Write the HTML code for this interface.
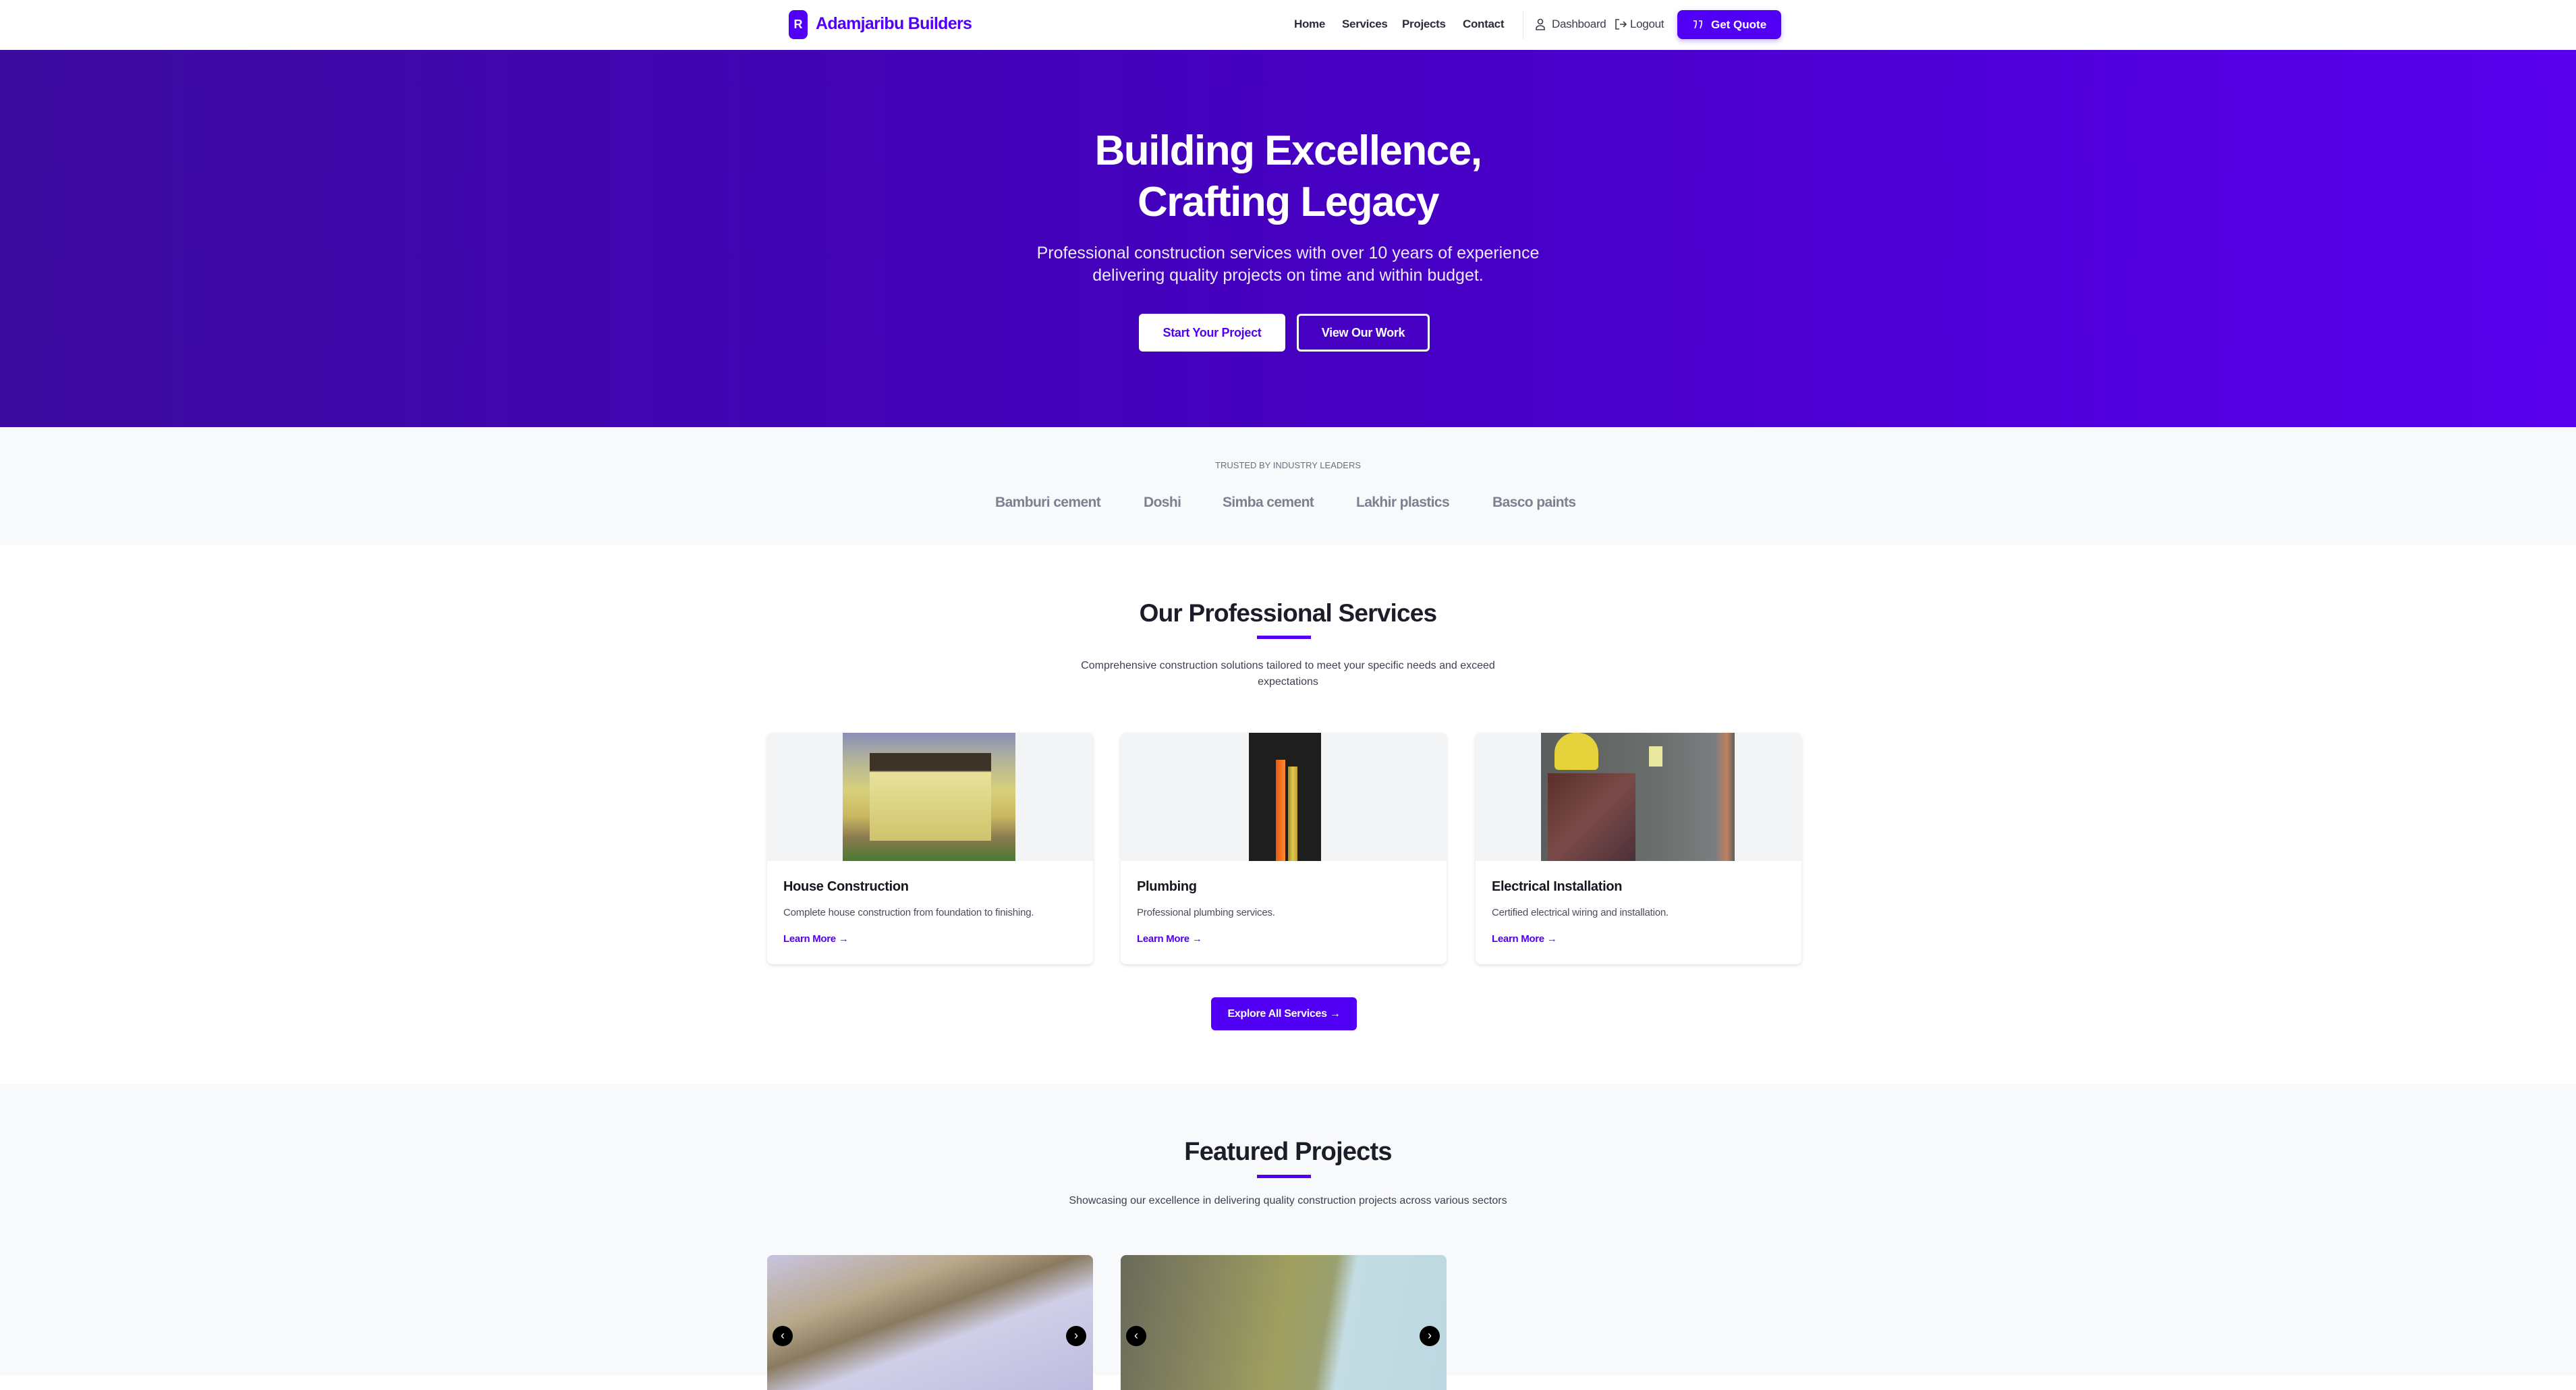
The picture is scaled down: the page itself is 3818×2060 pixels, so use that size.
<!DOCTYPE html>
<html><head><meta charset="utf-8"><style>
*{box-sizing:border-box;margin:0;padding:0}
body{width:3818px;height:2038px;overflow:hidden;font-family:"Liberation Sans",sans-serif;background:#fff;position:relative;color:#1f2030}
.a{position:absolute}
.c{position:absolute;left:0;width:3818px;text-align:center}
nav{position:absolute;left:0;top:0;width:3818px;height:74px;background:#fff;box-shadow:0 2px 4px rgba(0,0,0,.05)}
.nl{position:absolute;top:26px;font-size:17px;color:#2a2d3a;font-weight:bold;letter-spacing:-.3px}
.nl2{position:absolute;top:26px;font-size:17px;color:#3a3d4a;letter-spacing:-.3px}
.hero{position:absolute;left:0;top:74px;width:3818px;height:559px;background:linear-gradient(90deg,#3b0b9f 0%,#4500c0 50%,#5800ee 100%)}
.trust{position:absolute;left:0;top:633px;width:3818px;height:175px;background:#f8f9fb}
.logo{position:absolute;top:733px;font-size:21px;font-weight:bold;color:#7d808e;letter-spacing:-.6px}
.card{position:absolute;top:1086px;width:483px;height:343px;background:#fff;border-radius:8px;box-shadow:0 2px 6px rgba(0,0,0,.12);overflow:hidden}
.card .im{position:absolute;left:0;top:0;width:483px;height:190px;background:#f3f4f6}
.card h3{position:absolute;left:24px;top:217px;font-size:20px;font-weight:bold;color:#15161f;letter-spacing:-.3px}
.card p{position:absolute;left:24px;top:258px;font-size:15px;color:#4a4d5a;letter-spacing:-.2px}
.card a{position:absolute;left:24px;top:297px;font-size:15px;color:#5200f5;font-weight:bold;letter-spacing:-.3px}
.feat{position:absolute;left:0;top:1607px;width:3818px;height:431px;background:#f8f9fb}
.pc{position:absolute;top:1860px;width:483px;height:200px;border-radius:8px 8px 0 0;overflow:hidden}
.arr{position:absolute;top:1965px;width:30px;height:30px;border-radius:50%;background:#000;color:#fff;font-size:18px;text-align:center;line-height:28px}
</style></head><body>
<nav>
<div class="a" style="left:1169px;top:15px;width:28px;height:43px;background:#5200f5;border-radius:8px;color:#fff;font-weight:bold;font-size:18px;text-align:center;line-height:43px">R</div>
<div class="a" style="left:1209px;top:21px;font-size:25px;font-weight:bold;color:#5200f5;letter-spacing:-.7px">Adamjaribu Builders</div>
<div class="nl" style="left:1918px">Home</div>
<div class="nl" style="left:1989px">Services</div>
<div class="nl" style="left:2078px">Projects</div>
<div class="nl" style="left:2168px">Contact</div>
<div class="a" style="left:2257px;top:15px;width:1px;height:43px;background:#e5e7eb"></div>
<svg class="a" style="left:2276px;top:27px" width="14" height="18" viewBox="0 0 14 18"><circle cx="7" cy="5" r="3.5" fill="none" stroke="#3a3d4a" stroke-width="1.6"/><path d="M1 17v-2a6 4 0 0 1 12 0v2z" fill="none" stroke="#3a3d4a" stroke-width="1.6"/></svg>
<div class="nl2" style="left:2300px">Dashboard</div>
<svg class="a" style="left:2393px;top:27px" width="18" height="18" viewBox="0 0 18 18"><path d="M7 2H2v14h5M8 9h9M13 5l4 4-4 4" fill="none" stroke="#3a3d4a" stroke-width="1.6"/></svg>
<div class="nl2" style="left:2416px">Logout</div>
<div class="a" style="left:2486px;top:15px;width:154px;height:43px;background:#5200f5;border-radius:8px;color:#fff;font-weight:bold;font-size:17px;line-height:43px;padding-left:50px;box-shadow:0 3px 8px rgba(82,0,245,.3)">Get Quote</div>
<svg class="a" style="left:2508px;top:29px" width="16" height="15" viewBox="0 0 16 15"><path d="M2 2h4v5l-2 6M10 2h4v5l-2 6" fill="none" stroke="#fff" stroke-width="1.6"/></svg>
</nav>
<div class="hero"></div>
<div class="c" style="top:186px;font-size:62px;font-weight:bold;color:#fff;line-height:76px;letter-spacing:-1.5px">Building Excellence,<br>Crafting Legacy</div>
<div class="c" style="top:359px;font-size:25px;color:#ece8fb;line-height:33px;letter-spacing:0">Professional construction services with over 10 years of experience<br>delivering quality projects on time and within budget.</div>
<div class="a" style="left:1688px;top:465px;width:217px;height:56px;background:#fff;border-radius:6px;color:#5200f5;font-weight:bold;font-size:18px;text-align:center;line-height:56px;letter-spacing:-.3px">Start Your Project</div>
<div class="a" style="left:1922px;top:465px;width:197px;height:56px;border:3px solid #fff;border-radius:6px;color:#fff;font-weight:bold;font-size:18px;text-align:center;line-height:50px;letter-spacing:-.3px">View Our Work</div>
<div class="trust"></div>
<div class="c" style="top:682px;font-size:13px;color:#6b6e7c">TRUSTED BY INDUSTRY LEADERS</div>
<div class="logo" style="left:1475px">Bamburi cement</div>
<div class="logo" style="left:1695px">Doshi</div>
<div class="logo" style="left:1812px">Simba cement</div>
<div class="logo" style="left:2010px">Lakhir plastics</div>
<div class="logo" style="left:2212px">Basco paints</div>
<div class="c" style="top:888px;font-size:37px;font-weight:bold;color:#1c1d29;letter-spacing:-.8px">Our Professional Services</div>
<div class="a" style="left:1863px;top:942px;width:80px;height:5px;background:#5200f5"></div>
<div class="c" style="top:975px;font-size:16px;color:#3e4150;line-height:24px;letter-spacing:0">Comprehensive construction solutions tailored to meet your specific needs and exceed<br>expectations</div>
<div class="card" style="left:1137px"><div class="im"><div class="a" style="left:112px;top:0;width:256px;height:190px;background:linear-gradient(180deg,#8a8fb8 0%,#b0b29a 20%,#d8d07a 45%,#c9b860 65%,#8a7a50 82%,#4a7a30 100%)"><div class="a" style="left:40px;top:30px;width:180px;height:130px;background:linear-gradient(180deg,#3e3328 0,#3e3328 20%,#e8e29a 22%,#cfc46c 100%)"></div></div></div><h3>House Construction</h3><p>Complete house construction from foundation to finishing.</p><a>Learn More →</a></div>
<div class="card" style="left:1661px"><div class="im"><div class="a" style="left:190px;top:0;width:107px;height:190px;background:#1e1e1e"><div class="a" style="left:40px;top:40px;width:14px;height:150px;background:linear-gradient(90deg,#e85a10,#ff8a30)"></div><div class="a" style="left:58px;top:50px;width:14px;height:140px;background:linear-gradient(90deg,#a48a20,#e0c850,#c0a030)"></div></div></div><h3>Plumbing</h3><p>Professional plumbing services.</p><a>Learn More →</a></div>
<div class="card" style="left:2187px"><div class="im"><div class="a" style="left:97px;top:0;width:287px;height:190px;background:linear-gradient(90deg,#5a5e5e 0%,#6a6e6c 60%,#7a7e80 90%,#c08060 96%,#5a5e5e 100%)"><div class="a" style="left:20px;top:0;width:65px;height:55px;border-radius:30px 30px 6px 6px;background:#e6d23a"></div><div class="a" style="left:10px;top:60px;width:130px;height:130px;background:linear-gradient(135deg,#5a3028,#7a4a48,#4a3038)"></div><div class="a" style="left:160px;top:20px;width:20px;height:30px;background:#e8e8a0"></div></div></div><h3>Electrical Installation</h3><p>Certified electrical wiring and installation.</p><a>Learn More →</a></div>
<div class="a" style="left:1795px;top:1478px;width:216px;height:49px;background:#5200f5;border-radius:6px;color:#fff;font-weight:bold;font-size:16px;text-align:center;line-height:49px;letter-spacing:-.3px">Explore All Services →</div>
<div class="feat"></div>
<div class="c" style="top:1686px;font-size:38px;font-weight:bold;color:#1c1d29;letter-spacing:-.8px">Featured Projects</div>
<div class="a" style="left:1863px;top:1741px;width:80px;height:5px;background:#5200f5"></div>
<div class="c" style="top:1771px;font-size:16px;color:#3e4150;letter-spacing:0">Showcasing our excellence in delivering quality construction projects across various sectors</div>
<div class="pc" style="left:1137px;background:linear-gradient(160deg,#c8c4e0 0%,#b8a88a 30%,#8a7a60 45%,#cfcfe8 60%,#bdbce0 100%)"></div>
<div class="pc" style="left:1661px;background:linear-gradient(100deg,#6a6a5a 0%,#8a8a60 30%,#a0a060 50%,#9aa070 62%,#c4dde4 68%,#bcd8e0 100%)"></div>
<div class="arr" style="left:1145px">‹</div><div class="arr" style="left:1580px">›</div>
<div class="arr" style="left:1669px">‹</div><div class="arr" style="left:2104px">›</div>
</body></html>
